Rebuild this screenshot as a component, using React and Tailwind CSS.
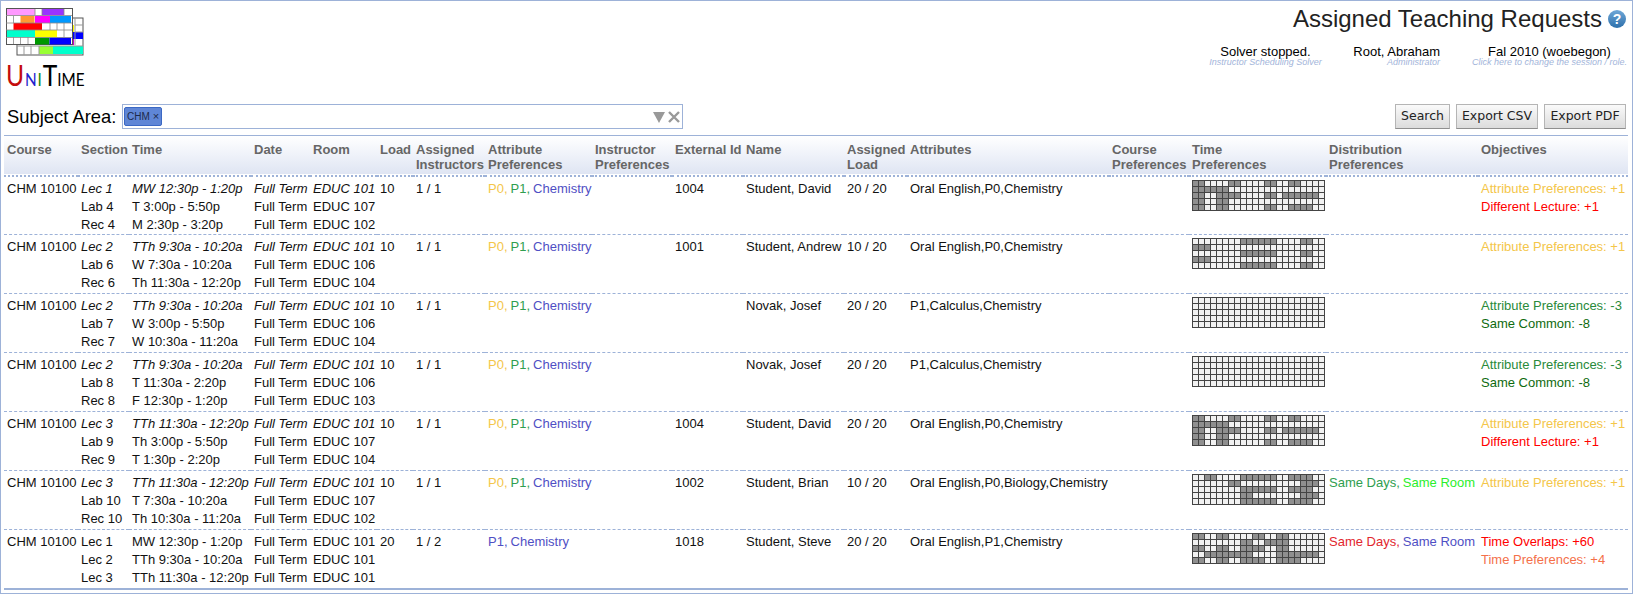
import { Fragment } from 'react'

// blue, yellow... colours used for the preference levels
const YELLOW = 'text-[#f4c64a]'
const GREEN = 'text-[#2f9e4f]'
const BLUE = 'text-[#4f4fc4]'
const LIME = 'text-[#2cee2c]'
const RED = 'text-[#e2262e]'

const COLS = [74, 51, 122, 59, 67, 36, 72, 107, 80, 71, 101, 63, 202, 80, 137, 152, 150]

const HEADERS = [
  ['Course'], ['Section'], ['Time'], ['Date'], ['Room'], ['Load'],
  ['Assigned', 'Instructors'], ['Attribute', 'Preferences'], ['Instructor', 'Preferences'],
  ['External Id'], ['Name'], ['Assigned', 'Load'], ['Attributes'], ['Course', 'Preferences'],
  ['Time', 'Preferences'], ['Distribution', 'Preferences'], ['Objectives'],
]

// time pattern : for each of the 5 lines, the ranges of grey cells
const DAVID = [
  [[0, 1], [6, 7], [12, 13], [16, 17]],
  [[0, 5]],
  [[0, 1], [4, 7], [12, 13], [15, 20]],
  [[0, 1], [4, 5]],
  [[0, 1], [4, 5], [12, 13], [16, 19]],
]
const ANDREW = [
  [[8, 13], [18, 19]],
  [[0, 2]],
  [[8, 13], [18, 19]],
  [[0, 2]],
  [[8, 13], [18, 19]],
]
const BRIAN = [
  [[2, 3], [8, 13], [16, 19]],
  [[6, 7], [18, 20]],
  [[8, 13], [16, 19]],
  [[8, 9], [18, 20]],
  [[8, 13], [16, 19]],
]
const STEVE = [
  [[0, 1], [4, 5], [10, 11], [14, 15]],
  [[8, 9], [12, 15]],
  [[0, 1], [4, 5], [8, 11], [14, 15]],
  [[2, 9], [14, 20]],
  [[0, 1], [4, 5], [8, 11], [14, 17]],
]
const EMPTY = [[], [], [], [], []]

const ATTR_PREFS = [['P0', YELLOW], ['P1', GREEN], ['Chemistry', BLUE]]
const OBJ_ATTR = [['Attribute Preferences: +1', YELLOW]]
const OBJ_DAVID = [['Attribute Preferences: +1', YELLOW], ['Different Lecture: +1', 'text-[#ff0000]']]
const OBJ_NOVAK = [['Attribute Preferences: -3', 'text-[#2a8a3a]'], ['Same Common: -8', 'text-[#0f6b0f]']]

const ROWS = [
  {
    sections: [['Lec 1', 'MW 12:30p - 1:20p', 'EDUC 101'], ['Lab 4', 'T 3:00p - 5:50p', 'EDUC 107'], ['Rec 4', 'M 2:30p - 3:20p', 'EDUC 102']],
    extId: '1004', name: 'Student, David', load: '20 / 20', attrs: 'Oral English,P0,Chemistry', grid: DAVID, obj: OBJ_DAVID,
  },
  {
    sections: [['Lec 2', 'TTh 9:30a - 10:20a', 'EDUC 101'], ['Lab 6', 'W 7:30a - 10:20a', 'EDUC 106'], ['Rec 6', 'Th 11:30a - 12:20p', 'EDUC 104']],
    extId: '1001', name: 'Student, Andrew', load: '10 / 20', attrs: 'Oral English,P0,Chemistry', grid: ANDREW, obj: OBJ_ATTR,
  },
  {
    sections: [['Lec 2', 'TTh 9:30a - 10:20a', 'EDUC 101'], ['Lab 7', 'W 3:00p - 5:50p', 'EDUC 106'], ['Rec 7', 'W 10:30a - 11:20a', 'EDUC 104']],
    extId: '', name: 'Novak, Josef', load: '20 / 20', attrs: 'P1,Calculus,Chemistry', grid: EMPTY, obj: OBJ_NOVAK,
  },
  {
    sections: [['Lec 2', 'TTh 9:30a - 10:20a', 'EDUC 101'], ['Lab 8', 'T 11:30a - 2:20p', 'EDUC 106'], ['Rec 8', 'F 12:30p - 1:20p', 'EDUC 103']],
    extId: '', name: 'Novak, Josef', load: '20 / 20', attrs: 'P1,Calculus,Chemistry', grid: EMPTY, obj: OBJ_NOVAK,
  },
  {
    sections: [['Lec 3', 'TTh 11:30a - 12:20p', 'EDUC 101'], ['Lab 9', 'Th 3:00p - 5:50p', 'EDUC 107'], ['Rec 9', 'T 1:30p - 2:20p', 'EDUC 104']],
    extId: '1004', name: 'Student, David', load: '20 / 20', attrs: 'Oral English,P0,Chemistry', grid: DAVID, obj: OBJ_DAVID,
  },
  {
    sections: [['Lec 3', 'TTh 11:30a - 12:20p', 'EDUC 101'], ['Lab 10', 'T 7:30a - 10:20a', 'EDUC 107'], ['Rec 10', 'Th 10:30a - 11:20a', 'EDUC 102']],
    extId: '1002', name: 'Student, Brian', load: '10 / 20', attrs: 'Oral English,P0,Biology,Chemistry', grid: BRIAN,
    dist: [['Same Days', GREEN], ['Same Room', LIME]], obj: OBJ_ATTR,
  },
  {
    sections: [['Lec 1', 'MW 12:30p - 1:20p', 'EDUC 101'], ['Lec 2', 'TTh 9:30a - 10:20a', 'EDUC 101'], ['Lec 3', 'TTh 11:30a - 12:20p', 'EDUC 101']],
    plain: true, loadCol: '20', assigned: '1 / 2', prefs: [['P1', BLUE], ['Chemistry', BLUE]],
    extId: '1018', name: 'Student, Steve', load: '20 / 20', attrs: 'Oral English,P1,Chemistry', grid: STEVE,
    dist: [['Same Days', RED], ['Same Room', BLUE]],
    obj: [['Time Overlaps: +60', 'text-[#ff0000]'], ['Time Preferences: +4', 'text-[#f4704a]']],
  },
]

function Logo() {
  return (
    <div className="w-[78px]">
      <svg width="78" height="48" viewBox="0 0 78 48" className="block">
        {/* back sheet */}
        <rect x="11" y="10" width="66" height="37" fill="#fff" stroke="#555" />
        <rect x="66" y="17" width="2" height="7" fill="#ffff00" />
        <rect x="66" y="24" width="11" height="7" fill="#0000ff" />
        <rect x="55" y="31" width="13" height="6" fill="#cc00cc" />
        <rect x="33" y="38" width="14" height="8" fill="#99ff33" />
        <rect x="47" y="38" width="30" height="8" fill="#00ffcc" />
        <path d="M11 38H77M18 38V47M25 38V47M33 38V47M69 10V37M77 17H69M77 24H69" stroke="#999" fill="none" />
        {/* front sheet */}
        <rect x="0.5" y="0.5" width="66" height="36" fill="#fff" stroke="#555" />
        <rect x="1" y="1" width="28" height="6.5" fill="#ff99ff" />
        <rect x="36" y="1" width="22" height="6.5" fill="#9933ff" />
        <rect x="14.5" y="8" width="14" height="7" fill="#ff9933" />
        <rect x="29" y="8" width="15" height="7" fill="#ff00ff" />
        <rect x="44" y="8" width="21" height="7" fill="#0099ff" />
        <rect x="7.5" y="15" width="28.5" height="7" fill="#ff0000" />
        <rect x="1" y="22" width="28" height="7" fill="#00ffcc" />
        <rect x="29" y="22" width="22" height="7" fill="#ffff00" />
        <rect x="29" y="29.5" width="14.5" height="7" fill="#009900" />
        <rect x="43.5" y="29.5" width="21.5" height="7" fill="#0000ff" />
        <path d="M0 7.5H66M0 15H66M0 22H66M0 29.5H66M7.5 8V15M7.5 29V36M14.5 29V36M22 29V36M36 1V7M44 15V22M51 15V22M58 15V29M29 1V7M58 1V7"
          stroke="#888" strokeWidth="0.8" fill="none" />
      </svg>
      <div className="mt-[4px] flex items-baseline h-[30px] origin-left scale-x-[0.85] font-['Lato'] leading-none whitespace-nowrap">
        <span className="text-[29px] text-[#c40d0d]">U</span>
        <span className="text-[18px] ml-[1px] text-[#2222cc]">N</span>
        <span className="text-[18px] ml-[1px] text-[#118811]">I</span>
        <span className="text-[29px] ml-[1px] text-black">T</span>
        <span className="text-[18px] text-black">IME</span>
      </div>
    </div>
  )
}

function InfoBlock({ top, bottom, className }) {
  return (
    <div className={className}>
      <div className="text-[13px] leading-[13px] text-black">{top}</div>
      <div className="text-[9px] leading-[9px] italic text-[#a3b5da] whitespace-nowrap">{bottom}</div>
    </div>
  )
}

function TimeGrid({ pattern }) {
  return (
    <div className="grid w-fit grid-cols-[repeat(22,5px)] gap-px p-px bg-[#444444]">
      {pattern.map((ranges, r) =>
        Array.from({ length: 22 }, (_, c) => {
          const on = ranges.some(([a, b]) => c >= a && c <= b)
          return <div key={`${r}-${c}`} className={on ? 'h-[5px] bg-[#8f8f8f]' : 'h-[5px] bg-[#f1f1f1]'} />
        })
      )}
    </div>
  )
}

function PrefList({ items }) {
  return items.map(([label, color], i) => (
    <Fragment key={label}>
      <span className={color}>{label}</span>
      {i < items.length - 1 && <span className={`${color} mr-[3px]`}>,</span>}
    </Fragment>
  ))
}

function Button({ children, className }) {
  return (
    <button className={`h-[25px] border border-[#b5b5b5] border-b-[#8f8f8f] bg-gradient-to-b from-[#fafafa] to-[#dcdcdc] font-['DejaVu_Sans'] text-[12.5px] text-[#222] ${className}`}>
      {children}
    </button>
  )
}

export default function App() {
  return (
    <div className="w-[1633px] h-[594px] overflow-hidden border border-[#9db2d8] px-[2px] bg-white font-['Liberation_Sans',Arial,sans-serif] text-[13px] text-[#111]">
      {/* ── Header ─────────────────────────── */}
      <div className="flex justify-between h-[103px] pt-[7px] pl-[3px] pr-[3px]">
        <Logo />
        <div className="flex flex-col items-end">
          <div className="flex items-center gap-[6px] h-[28px] mt-[-3px] mr-[1px]">
            <h1 className="text-[24px] font-normal text-[#222] leading-none whitespace-nowrap">Assigned Teaching Requests</h1>
            <div className="w-[18px] h-[18px] rounded-full bg-gradient-to-b from-[#6fa8d8] to-[#2d70ab] text-white font-bold text-[14px] leading-[18px] text-center">?</div>
          </div>
          <div className="flex mt-[12px]">
            <InfoBlock top="Solver stopped." bottom="Instructor Scheduling Solver" className="w-[113px] text-center" />
            <InfoBlock top="Root, Abraham" bottom="Administrator" className="w-[118px] text-right" />
            <InfoBlock top="Fal 2010 (woebegon)" bottom="Click here to change the session / role." className="w-[155px] ml-[32px] text-center" />
          </div>
        </div>
      </div>

      {/* ── Filter line ────────────────────── */}
      <div className="flex items-center justify-between h-[25px] pl-[4px] pr-[4px]">
        <div className="flex items-center">
          <span className="text-[18.4px] text-black w-[115px] whitespace-nowrap">Subject Area:</span>
          <div className="flex items-center justify-between w-[561px] h-[25px] border border-[#9db2d8] pl-[1px] pr-[2px]">
            <span className="flex items-center gap-[3px] h-[19px] px-[2px] rounded-[2px] bg-[#5f86d6] border border-[#3b68c4] font-['Liberation_Sans'] text-[10px] text-[#1d2a4a]">
              CHM <span className="text-[11px]">×</span>
            </span>
            <div className="flex items-center gap-[3px]">
              <svg width="12" height="12" viewBox="0 0 12 12"><path d="M0 1H12L6 12Z" fill="#999" /></svg>
              <svg width="12" height="12" viewBox="0 0 12 12"><path d="M1 1L11 11M11 1L1 11" stroke="#999" strokeWidth="2.4" fill="none" /></svg>
            </div>
          </div>
        </div>
        <div className="flex gap-[6px]">
          <Button className="w-[55px]">Search</Button>
          <Button className="w-[82px]">Export CSV</Button>
          <Button className="w-[82px]">Export PDF</Button>
        </div>
      </div>

      {/* ── Table ──────────────────────────── */}
      <table className="mt-[6px] ml-[1px] w-[1624px] table-fixed border-collapse border-t border-b-2 border-t-[#9db2d8] border-b-[#9db2d8]">
        <colgroup>
          {COLS.map((w, i) => <col key={i} style={{ width: w }} />)}
        </colgroup>
        <thead>
          <tr className="bg-gradient-to-b from-white to-[#dfe5f3] border-b-2 border-dotted border-b-[#9db2d8]">
            {HEADERS.map((lines, i) => (
              <th key={i} className="h-[40px] px-[3px] pt-[6px] align-top text-left font-bold text-[13px] leading-[15px] text-[#666] whitespace-nowrap">
                {lines.map(l => <div key={l}>{l}</div>)}
              </th>
            ))}
          </tr>
        </thead>
        <tbody>
          {ROWS.map((row, i) => (
            <tr key={i} className={i ? 'border-t border-dashed border-t-[#9db2d8]' : ''}>
              <Cell>CHM 10100</Cell>
              {[0, 3, null, 2].map((k, col) => (
                <Cell key={col}>
                  {row.sections.map((s, j) => {
                    const text = k === 3 ? s[1] : k === null ? 'Full Term' : s[k]
                    const italic = j === 0 && !row.plain
                    return <div key={j} className={italic ? 'italic' : ''}>{text}</div>
                  })}
                </Cell>
              ))}
              <Cell>{row.loadCol || '10'}</Cell>
              <Cell>{row.assigned || '1 / 1'}</Cell>
              <Cell><PrefList items={row.prefs || ATTR_PREFS} /></Cell>
              <Cell />
              <Cell>{row.extId}</Cell>
              <Cell>{row.name}</Cell>
              <Cell>{row.load}</Cell>
              <Cell>{row.attrs}</Cell>
              <Cell />
              <Cell><TimeGrid pattern={row.grid} /></Cell>
              <Cell>{row.dist && <PrefList items={row.dist} />}</Cell>
              <Cell>
                {row.obj.map(([label, color]) => <div key={label} className={color}>{label}</div>)}
              </Cell>
            </tr>
          ))}
        </tbody>
      </table>
    </div>
  )
}

function Cell({ children }) {
  return <td className="h-[59px] px-[3px] pt-[3px] align-top leading-[18px] whitespace-nowrap">{children}</td>
}
